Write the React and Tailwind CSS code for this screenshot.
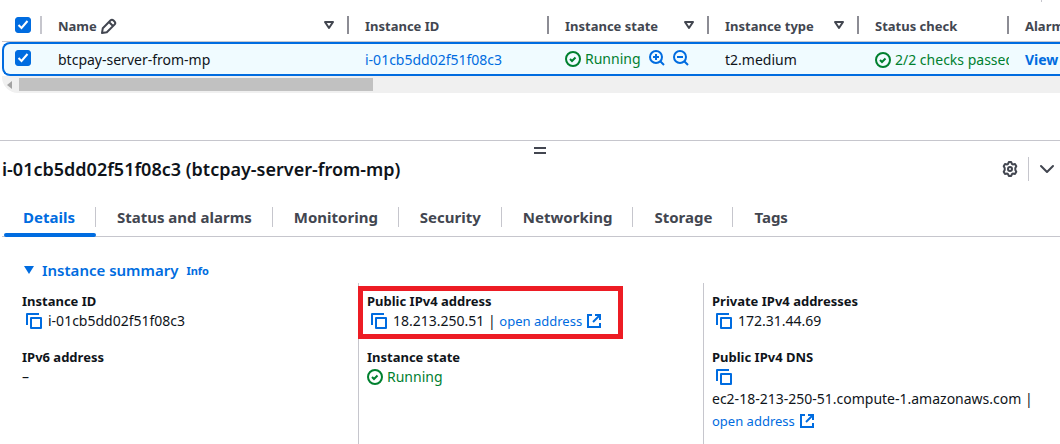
import React from "react";

function Icon({ className = "", children }) {
  return (
    <svg
      viewBox="0 0 16 16"
      width="16"
      height="16"
      fill="none"
      stroke="currentColor"
      strokeWidth="2"
      strokeLinejoin="round"
      aria-hidden="true"
      className={`block shrink-0 ${className}`}
    >
      {children}
    </svg>
  );
}

const CopyIcon = () => (
  <Icon>
    <path d="M15 5H5v10h10V5Z" />
    <path d="M13 1H1v11" />
  </Icon>
);

const ExternalIcon = () => (
  <Icon>
    <path d="M14 10v4H2V2h4" strokeLinejoin="miter" />
    <path d="M9 2h5v5" strokeLinejoin="miter" />
    <path d="m7 9 7-7" />
  </Icon>
);

const CheckCircleIcon = () => (
  <Icon>
    <circle cx="8" cy="8" r="7" />
    <path d="m5 8 2 2 3.5-3.5" strokeLinejoin="miter" />
  </Icon>
);

const ZoomIcon = ({ plus }) => (
  <Icon>
    <circle cx="7" cy="7" r="6" />
    <path d="m11.5 11.5 3.5 3.5M4 7h6" />
    {plus && <path d="M7 4v6" />}
  </Icon>
);

const PencilIcon = () => (
  <Icon>
    <path d="m1.8 10.2 7.6-7.7a2.2 2.2 0 0 1 3.1 0l1 1a2.2 2.2 0 0 1 0 3.1l-7.7 7.6L1 15l.8-4.8ZM8 4l4 4" />
  </Icon>
);

const GearIcon = () => (
  <Icon>
    <path d="M6.8 1.1h2.4L10 3l.8.5 2.2-.4 1.3 2.2-1 1.7v2l1 1.7-1.3 2.2-2.2-.4-.8.5-.8 1.9H6.8L6 13l-.8-.5-2.2.4-1.3-2.2 1-1.7V7l-1-1.7L3 3.1l2.2.4L6 3Z" />
    <circle cx="8" cy="8" r="2" />
  </Icon>
);

const ChevronIcon = () => (
  <Icon>
    <path d="m2 5 6 6 6-6" strokeLinecap="round" />
  </Icon>
);

const SortIcon = () => (
  <Icon>
    <path d="M4 5h8l-4 6-4-6Z" />
  </Icon>
);

function Checkbox({ label }) {
  return (
    <span className="relative block size-4">
      <input
        type="checkbox"
        defaultChecked
        aria-label={label}
        className="peer block size-4 appearance-none rounded-[3px] border border-[#8c8c94] bg-white checked:border-[#006ce0] checked:bg-[#006ce0]"
      />
      <svg
        viewBox="0 0 16 16"
        fill="none"
        stroke="white"
        strokeWidth="2"
        aria-hidden="true"
        className="pointer-events-none absolute inset-0 hidden size-4 peer-checked:block"
      >
        <path d="m3.5 8 3 3 6-7" />
      </svg>
    </span>
  );
}

function HeaderCell({ children, sort, last }) {
  return (
    <th scope="col" className="h-[34px] border-b border-[#c6c6cd] p-0 text-left font-bold">
      <div
        className={`flex h-[18px] items-center justify-between pr-[10px] pl-4 whitespace-nowrap ${
          last ? "" : "border-r-2 border-[#8c8c94]"
        }`}
      >
        <span className="flex items-center gap-1 pt-[2px]">{children}</span>
        {sort && (
          <button type="button" aria-label="Sort">
            <SortIcon />
          </button>
        )}
      </div>
    </th>
  );
}

const rowCell =
  "h-[34px] overflow-hidden border-y-2 border-[#006ce0] bg-[#f0fbff] pt-[2px] pr-0 pb-0 pl-4 whitespace-nowrap";

function InstancesTable() {
  return (
    <div className="overflow-hidden pl-[2px]">
      <table className="w-full min-w-[1150px] table-fixed border-separate border-spacing-0 text-sm leading-5">
        <colgroup>
          <col className="w-[40px]" />
          <col className="w-[307px]" />
          <col className="w-[200px]" />
          <col className="w-[160px]" />
          <col className="w-[150px]" />
          <col className="w-[150px]" />
          <col />
        </colgroup>
        <thead className="text-[13px] text-[#424650]">
          <tr>
            <th className="h-[34px] border-b border-[#c6c6cd] p-0">
              <div className="flex h-[18px] items-center border-r-2 border-[#c6c6cd] pl-[13px]">
                <Checkbox label="Select all instances" />
              </div>
            </th>
            <HeaderCell sort>
              Name
              <button type="button" aria-label="Edit name">
                <PencilIcon />
              </button>
            </HeaderCell>
            <HeaderCell>Instance ID</HeaderCell>
            <HeaderCell sort>Instance state</HeaderCell>
            <HeaderCell sort>Instance type</HeaderCell>
            <HeaderCell>Status check</HeaderCell>
            <HeaderCell last>Alarm status</HeaderCell>
          </tr>
        </thead>
        <tbody className="text-[#0f141a]">
          <tr>
            <td className="h-[34px] rounded-l-lg border-y-2 border-l-2 border-[#006ce0] bg-[#f0fbff] pt-0 pr-0 pb-[2px] pl-[11px]">
              <Checkbox label="Select btcpay-server-from-mp" />
            </td>
            <td className={rowCell}>btcpay-server-from-mp</td>
            <td className={rowCell}>
              <a href="#instance" className="text-[#006ce0]">i-01cb5dd02f51f08c3</a>
            </td>
            <td className="h-[34px] overflow-hidden border-y-2 border-[#006ce0] bg-[#f0fbff] py-0 pr-0 pl-4 whitespace-nowrap">
              <div className="flex items-center">
                <span className="flex items-center gap-1 text-[#00802f]">
                  <CheckCircleIcon />
                  Running
                </span>
                <span className="ml-2 flex gap-2 pb-[2px] text-[#006ce0]">
                  <button type="button" aria-label="Filter for this value"><ZoomIcon plus /></button>
                  <button type="button" aria-label="Filter out this value"><ZoomIcon /></button>
                </span>
              </div>
            </td>
            <td className={rowCell}>t2.medium</td>
            <td className={rowCell}>
              <div className="flex items-center gap-1 overflow-hidden text-[#00802f]">
                <CheckCircleIcon />
                <span className="overflow-hidden">2/2 checks passed</span>
              </div>
            </td>
            <td className={rowCell}>
              <a href="#alarms" className="font-bold text-[#006ce0]">View alarms</a>
            </td>
          </tr>
        </tbody>
      </table>
      <div className="flex h-[17px] items-center rounded-bl-2xl bg-[#f0f0f0] pl-[5px]">
        <svg viewBox="0 0 5 8" width="5" height="8" fill="#a3a3a3" aria-hidden="true" className="mr-[7px]">
          <path d="M5 0v8L0 4Z" />
        </svg>
        <div className="h-[13px] w-[354px] bg-[#c1c1c1]" />
      </div>
    </div>
  );
}

const tabs = ["Details", "Status and alarms", "Monitoring", "Security", "Networking", "Storage", "Tags"];

function Tabs() {
  return (
    <div role="tablist" className="ml-[2px] flex h-[39px] border-b border-[#c6c6cd] pl-[2px] font-bold">
      {tabs.map((tab, i) => (
        <button
          key={tab}
          type="button"
          role="tab"
          aria-selected={i === 0}
          className={`flex h-[39px] flex-col text-[15px] leading-5 whitespace-nowrap ${
            i === 0 ? "text-[#006ce0]" : "text-[#424650]"
          }`}
        >
          <span
            className={`mt-[9px] ${i === 0 ? "pl-[19px]" : "pl-[21px]"} pr-5 ${
              i < tabs.length - 1 ? "border-r border-[#c6c6cd]" : ""
            }`}
          >
            {tab}
          </span>
          {i === 0 && <span className="mt-auto h-1 w-full rounded-xs bg-[#006ce0]" />}
        </button>
      ))}
    </div>
  );
}

function CopyButton() {
  return (
    <button type="button" aria-label="Copy" className="mx-1 align-middle text-[#006ce0]">
      <CopyIcon />
    </button>
  );
}

function OpenAddress() {
  return (
    <a href="#open" className="inline-flex items-center gap-1 align-top text-[13px] text-[#006ce0]">
      open address
      <ExternalIcon />
    </a>
  );
}

function Field({ label, children, highlighted }) {
  return (
    <div className="relative">
      <dt className="text-[13px] leading-[18px] font-bold">{label}</dt>
      <dd className="leading-[22px]">{children}</dd>
      {highlighted && (
        <div className="pointer-events-none absolute -top-[6px] -left-[9px] h-[53px] w-[265px] border-5 border-[#ed1c24]" />
      )}
    </div>
  );
}

const column = "flex flex-col gap-4 pt-[9px] pl-2";

function InstanceSummary() {
  return (
    <section className="pt-[22px] pr-3 pl-[13px] text-[#0f141a]">
      <div className="mb-[2px] flex h-[22px] items-center pl-2 text-[#006ce0]">
        <button type="button" className="flex items-center gap-[5px] text-[15px] leading-5 font-semibold">
          <svg viewBox="0 0 16 16" width="16" height="16" fill="currentColor" aria-hidden="true">
            <path d="M3 4h10L8 12Z" />
          </svg>
          Instance summary
        </button>
        <a href="#info" className="ml-2 pt-[2px] text-[11px] leading-4 font-bold">Info</a>
      </div>
      <dl className="grid grid-cols-3 text-sm">
        <div className={`${column} border-l border-transparent`}>
          <Field label="Instance ID">
            <span className="flex items-center gap-[2px]"><CopyButton />i-01cb5dd02f51f08c3</span>
          </Field>
          <Field label="IPv6 address">–</Field>
        </div>
        <div className={`${column} border-l border-[#c6c6cd]`}>
          <Field label="Public IPv4 address" highlighted>
            <span className="flex items-center gap-[2px] whitespace-nowrap">
              <CopyButton />
              <span>18.213.250.51 | <OpenAddress /></span>
            </span>
          </Field>
          <Field label="Instance state">
            <span className="flex items-center gap-1 text-[#00802f]"><CheckCircleIcon />Running</span>
          </Field>
        </div>
        <div className={`${column} border-l border-[#c6c6cd] pb-3`}>
          <Field label="Private IPv4 addresses">
            <span className="flex items-center gap-[2px]"><CopyButton />172.31.44.69</span>
          </Field>
          <Field label="Public IPv4 DNS">
            <span className="flex h-[22px] items-center"><CopyButton /></span>
            <span className="block whitespace-nowrap">ec2-18-213-250-51.compute-1.amazonaws.com |</span>
            <OpenAddress />
          </Field>
        </div>
      </dl>
    </section>
  );
}

export default function App() {
  return (
    <main className="overflow-hidden bg-white font-['Noto_Sans',sans-serif]">
      <div className="flex h-2 justify-end pr-[18px]">
        <div className="h-[2px] w-px bg-[#c6c6cd]" />
      </div>
      <InstancesTable />
      <section className="mt-[47px] border-t border-[#c6c6cd]">
        <div className="flex h-[14px] items-center justify-center pl-5">
          <button type="button" aria-label="Resize panel" className="mt-1 h-[7px] w-3 border-y-2 border-[#424650]" />
        </div>
        <header className="flex h-7 items-center justify-between pr-[5px] pl-[2px]">
          <h2 className="text-lg leading-5 font-semibold text-[#0f141a]">i-01cb5dd02f51f08c3 (btcpay-server-from-mp)</h2>
          <div className="flex items-center text-[#424650]">
            <button type="button" aria-label="Preferences"><GearIcon /></button>
            <span className="mr-[10px] ml-[10px] h-6 w-px bg-[#c6c6cd]" />
            <button type="button" aria-label="Close panel"><ChevronIcon /></button>
          </div>
        </header>
        <div className="pt-[15px]">
          <Tabs />
        </div>
        <InstanceSummary />
      </section>
    </main>
  );
}
